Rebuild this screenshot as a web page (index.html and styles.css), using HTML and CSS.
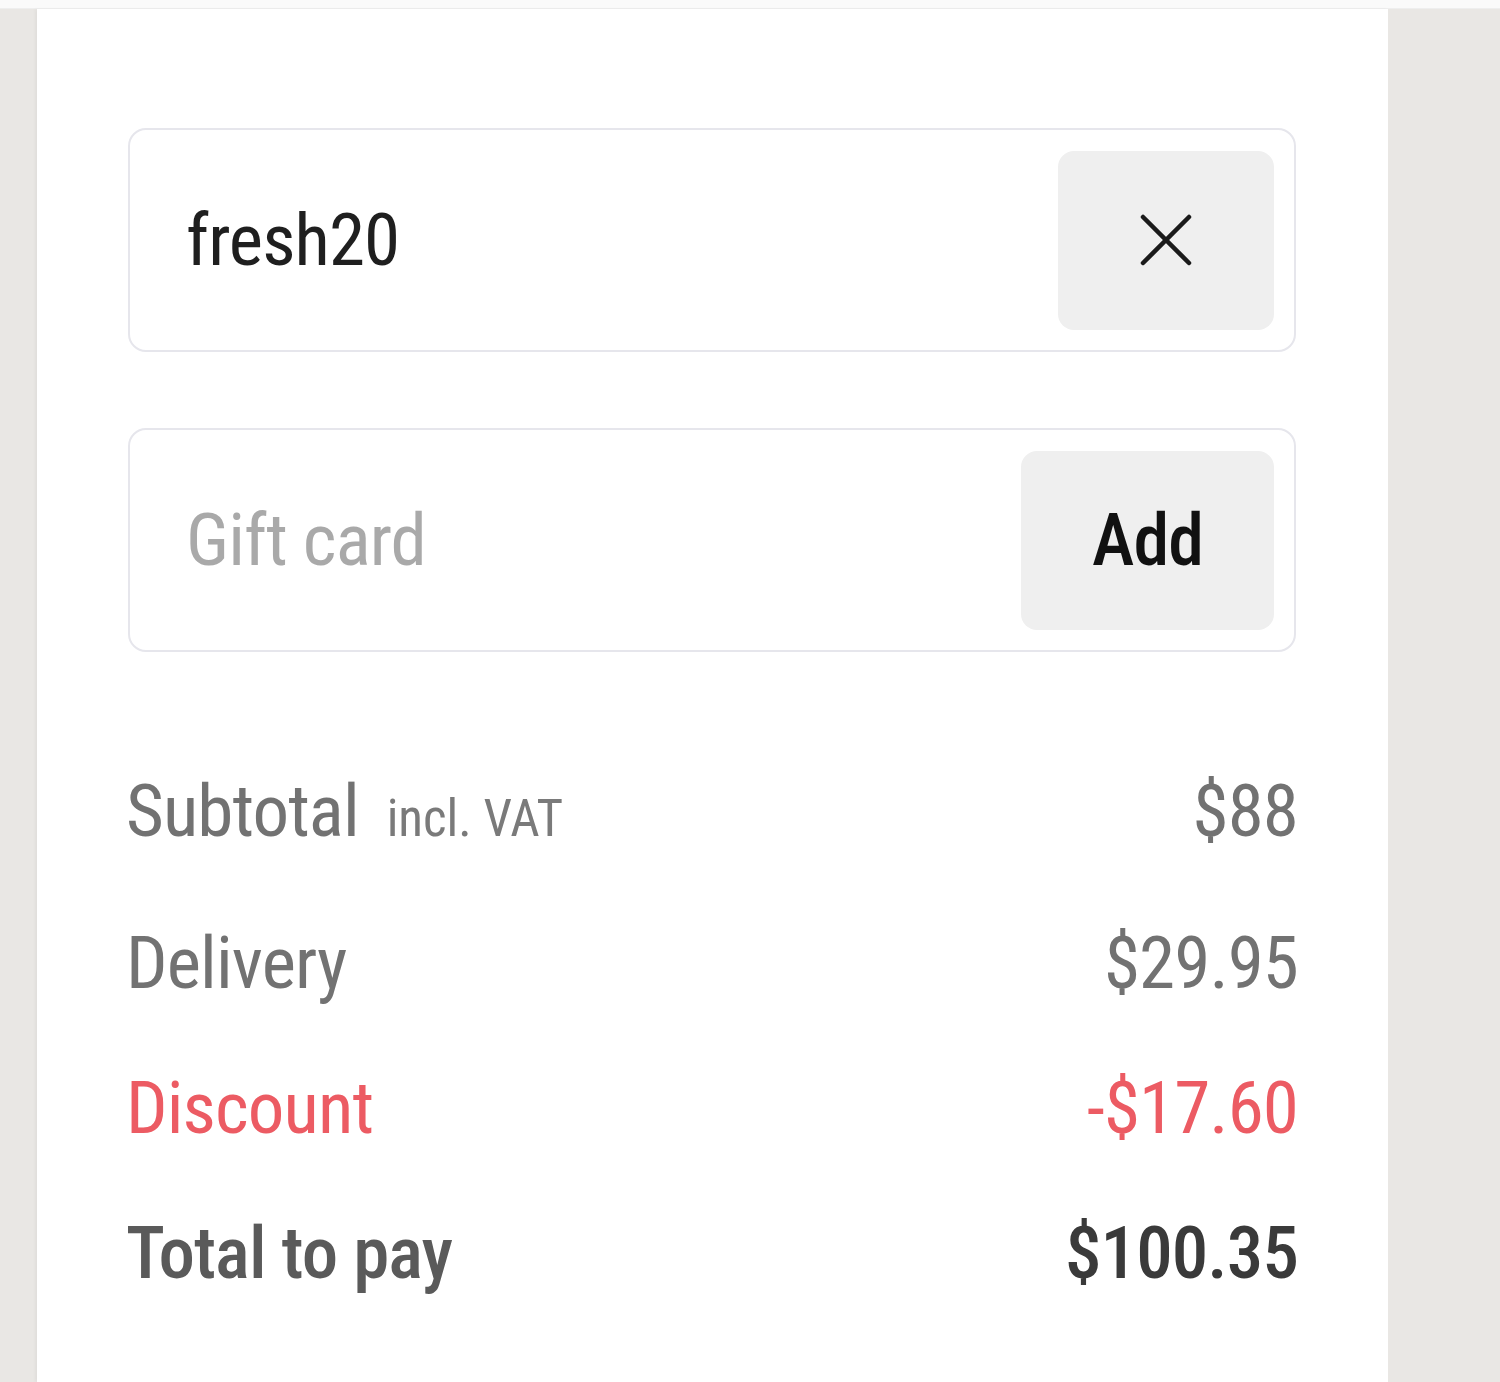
FILE: index.html
```html
<!DOCTYPE html>
<html lang="en">
<head>
<meta charset="utf-8">
<title>Cart summary</title>
<link rel="stylesheet" href="styles.css">
</head>
<body>
<div class="topbar"></div>
<div class="page">
  <main class="panel">
    <div class="field">
      <span class="field-value">fresh20</span>
      <button class="btn btn-clear" aria-label="Remove code">
        <svg width="52" height="52" viewBox="0 0 52 52" aria-hidden="true">
          <path d="M3 3 L49 49 M49 3 L3 49" stroke="#1a1a1a" stroke-width="4.5" stroke-linecap="round" fill="none"/>
        </svg>
      </button>
    </div>
    <div class="field">
      <span class="field-placeholder">Gift card</span>
      <button class="btn btn-add">Add</button>
    </div>
    <div class="summary">
      <div class="row"><span class="label">Subtotal <small class="note">incl. VAT</small></span><span class="amount">$88</span></div>
      <div class="row"><span class="label">Delivery</span><span class="amount">$29.95</span></div>
      <div class="row row-discount"><span class="label">Discount</span><span class="amount">-$17.60</span></div>
      <div class="row row-total"><span class="label">Total to pay</span><span class="amount">$100.35</span></div>
    </div>
  </main>
</div>
</body>
</html>
```
FILE: styles.css
```css
html, body {
  margin: 0;
  padding: 0;
}
body {
  background: #e9e7e4;
  font-family: Roboto, "Liberation Sans", sans-serif;
  font-stretch: 79%;
  letter-spacing: -0.9px;
  height: 1382px;
  overflow: hidden;
}
.topbar {
  height: 8px;
  background: #fafafa;
  border-bottom: 1px solid #eeeeee;
}
.page {
  display: flex;
  padding-left: 37px;
  height: 1373px;
}
.panel {
  width: 1351px;
  background: #ffffff;
  box-shadow: -2px 0 3px rgba(0,0,0,0.04);
  box-sizing: border-box;
  padding: 119px 92px 0 91px;
}
.field {
  box-sizing: border-box;
  height: 224px;
  border: 2.5px solid #e6e6ec;
  border-radius: 18px;
  display: flex;
  align-items: center;
  justify-content: space-between;
  padding: 0 20px 0 56px;
  margin-bottom: 76px;
}
.field-value {
  font-size: 73px;
  color: #1f1f1f;
}
.field-placeholder {
  font-size: 73px;
  color: #a9a9a9;
}
.btn {
  border: none;
  background: #efefef;
  border-radius: 16px;
  height: 179px;
  display: flex;
  align-items: center;
  justify-content: center;
  padding: 0;
  font-family: inherit;
  font-stretch: inherit;
  letter-spacing: inherit;
}
.btn-clear {
  width: 216px;
}
.btn-add {
  width: 253px;
  font-size: 72px;
  font-weight: 500;
  color: #111111;
}
.summary {
  padding-top: 11px;
  margin: 0 -2px 0 -2px;
}
.row {
  display: flex;
  justify-content: space-between;
  align-items: baseline;
  font-size: 73px;
  line-height: 145px;
  color: #727272;
}
.note {
  font-size: 51px;
  letter-spacing: 0;
  margin-left: 12px;
  color: #7a7a7a;
}
.row-discount {
  color: #ec5b63;
}
.row-total {
  font-weight: 500;
  color: #5a5a5a;
}
.row-total .amount {
  color: #3a3a3a;
}
```
